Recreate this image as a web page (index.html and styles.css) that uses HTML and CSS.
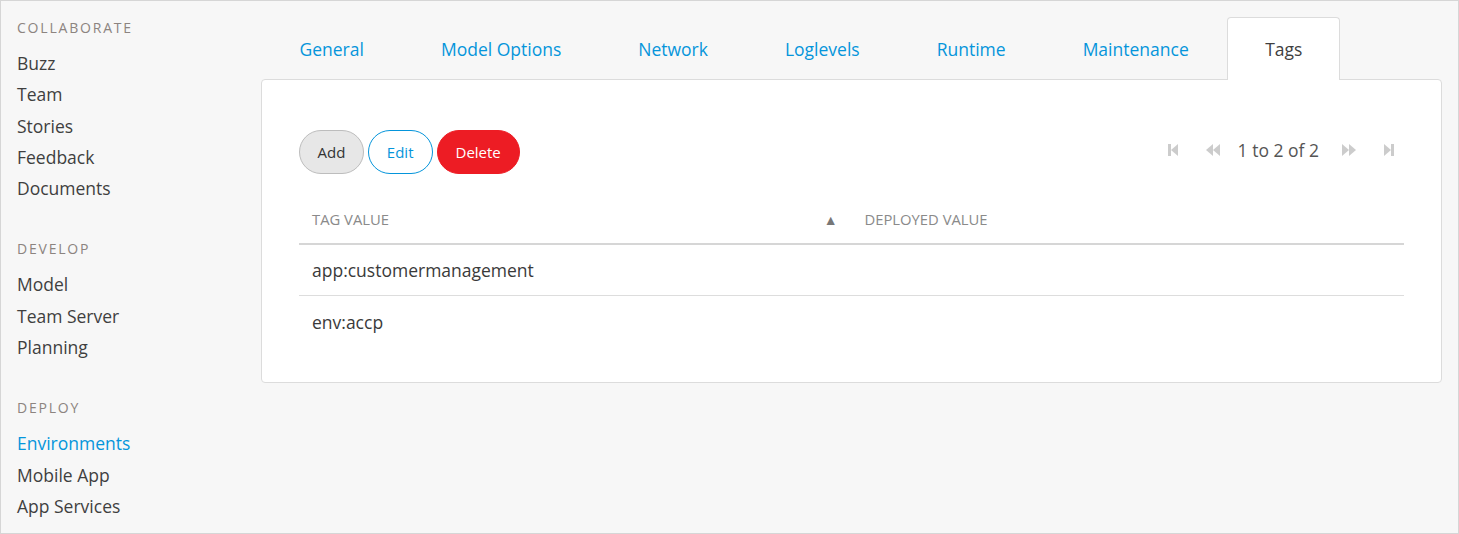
FILE: index.html
```html
<!DOCTYPE html>
<html>
<head>
<meta charset="utf-8">
<link rel="stylesheet" href="styles.css">
</head>
<body>
<div class="frame">
  <nav class="sidebar">
    <div class="section">
      <div class="heading">COLLABORATE</div>
      <a class="item">Buzz</a>
      <a class="item">Team</a>
      <a class="item">Stories</a>
      <a class="item">Feedback</a>
      <a class="item">Documents</a>
    </div>
    <div class="section">
      <div class="heading">DEVELOP</div>
      <a class="item">Model</a>
      <a class="item">Team Server</a>
      <a class="item">Planning</a>
    </div>
    <div class="section">
      <div class="heading">DEPLOY</div>
      <a class="item active">Environments</a>
      <a class="item">Mobile App</a>
      <a class="item">App Services</a>
    </div>
  </nav>
  <main class="content">
    <ul class="tabs">
      <li class="tab">General</li>
      <li class="tab">Model Options</li>
      <li class="tab">Network</li>
      <li class="tab">Loglevels</li>
      <li class="tab">Runtime</li>
      <li class="tab">Maintenance</li>
      <li class="tab active">Tags</li>
    </ul>
    <section class="panel">
      <div class="toolbar">
        <div class="buttons">
          <button class="btn btn-default">Add</button>
          <button class="btn btn-edit">Edit</button>
          <button class="btn btn-danger">Delete</button>
        </div>
        <div class="pager">
          <svg class="pico" width="12" height="14" viewBox="0 0 12 14"><rect x="1" y="1" width="3" height="12" fill="#cccccc"/><polygon points="11,1 4,7 11,13" fill="#cccccc"/></svg>
          <svg class="pico" width="16" height="14" viewBox="0 0 16 14"><polygon points="8,1 1,7 8,13" fill="#cccccc"/><polygon points="15,1 8,7 15,13" fill="#cccccc"/></svg>
          <span class="count">1 to 2 of 2</span>
          <svg class="pico" width="16" height="14" viewBox="0 0 16 14"><polygon points="1,1 8,7 1,13" fill="#cccccc"/><polygon points="8,1 15,7 8,13" fill="#cccccc"/></svg>
          <svg class="pico" width="12" height="14" viewBox="0 0 12 14"><polygon points="1,1 8,7 1,13" fill="#cccccc"/><rect x="8" y="1" width="3" height="12" fill="#cccccc"/></svg>
        </div>
      </div>
      <div class="table">
        <div class="row head">
          <div class="cell sorted">TAG VALUE<span class="sort">&#9650;</span></div>
          <div class="cell">DEPLOYED VALUE</div>
        </div>
        <div class="row">
          <div class="cell">app:customermanagement</div>
          <div class="cell"></div>
        </div>
        <div class="row last">
          <div class="cell">env:accp</div>
          <div class="cell"></div>
        </div>
      </div>
    </section>
  </main>
</div>
</body>
</html>
```

FILE: styles.css
```css
* { box-sizing: border-box; }
html, body { margin: 0; padding: 0; }
body {
  font-family: "Open Sans", "Liberation Sans", sans-serif;
  background: #ffffff;
}
.frame {
  width: 1459px;
  height: 534px;
  border: 1px solid #d6d6d6;
  background: #f7f7f7;
  display: grid;
  grid-template-columns: 260px 1fr;
  overflow: hidden;
}
.sidebar {
  padding: 17px 0 0 16px;
}
.section { display: flex; flex-direction: column; margin-bottom: 35px; }
.heading {
  font-size: 14px;
  line-height: 20px;
  letter-spacing: 1.8px;
  color: #8c8480;
  margin-bottom: 10px;
}
.item {
  font-size: 17.5px;
  line-height: 31.3px;
  color: #3f3f3f;
}
.item.active { color: #0595db; }

.content {
  padding: 16px 16px 0 0;
}
.tabs {
  list-style: none;
  margin: 0;
  padding: 0;
  display: flex;
  position: relative;
  z-index: 1;
}
.tab {
  height: 63px;
  line-height: 63px;
  padding: 0 37.5px;
  font-size: 17.5px;
  color: #0595db;
  border: 1px solid transparent;
  border-bottom: none;
  margin-bottom: -1px;
}
.tab.active {
  background: #ffffff;
  border-color: #dcdcdc;
  border-radius: 4px 4px 0 0;
  color: #3f3f3f;
  padding: 0 37px;
}
.panel {
  background: #ffffff;
  border: 1px solid #dcdcdc;
  border-radius: 4px;
  padding: 50px 37px 35px 37px;
}
.toolbar {
  display: flex;
  justify-content: space-between;
  align-items: center;
  height: 44px;
}
.buttons { display: flex; gap: 4px; }
.btn {
  height: 44px;
  border-radius: 22px;
  font-family: "Open Sans", "Liberation Sans", sans-serif;
  font-size: 15px;
  padding: 0 17.5px;
  border: 1px solid transparent;
  cursor: pointer;
}
.btn-default { background: #e7e7e7; border-color: #bdbdbd; color: #333333; }
.btn-edit { background: #ffffff; border-color: #0595db; color: #0595db; padding: 0 18px; }
.btn-danger { background: #ed1c24; border-color: #ed1c24; color: #ffffff; padding: 0 18px; }

.pager {
  display: flex;
  align-items: center;
  margin-right: 9px;
  margin-top: -4px;
}
.pico { display: block; }
.pager .pico:nth-child(1) { margin-right: 26px; }
.pager .pico:nth-child(2) { margin-right: 17px; }
.pager .pico:nth-child(4) { margin-left: 22px; margin-right: 26px; }
.count { font-size: 17.5px; color: #555555; }

.table { margin-top: 21px; }
.row {
  display: grid;
  grid-template-columns: 1fr 1fr;
  height: 51px;
  border-bottom: 1px solid #dddddd;
  align-items: center;
}
.row.last { border-bottom: none; }
.row.head {
  height: 50px;
  border-bottom: 2px solid #d6d6d6;
}
.cell {
  padding-left: 13px;
  font-size: 17.5px;
  color: #3a3a3a;
}
.head .cell {
  font-size: 14.8px;
  color: #8a8a8a;
}
.sorted { display: flex; justify-content: space-between; align-items: center; padding-right: 14px; }
.sort { font-size: 14px; color: #777777; }
```
